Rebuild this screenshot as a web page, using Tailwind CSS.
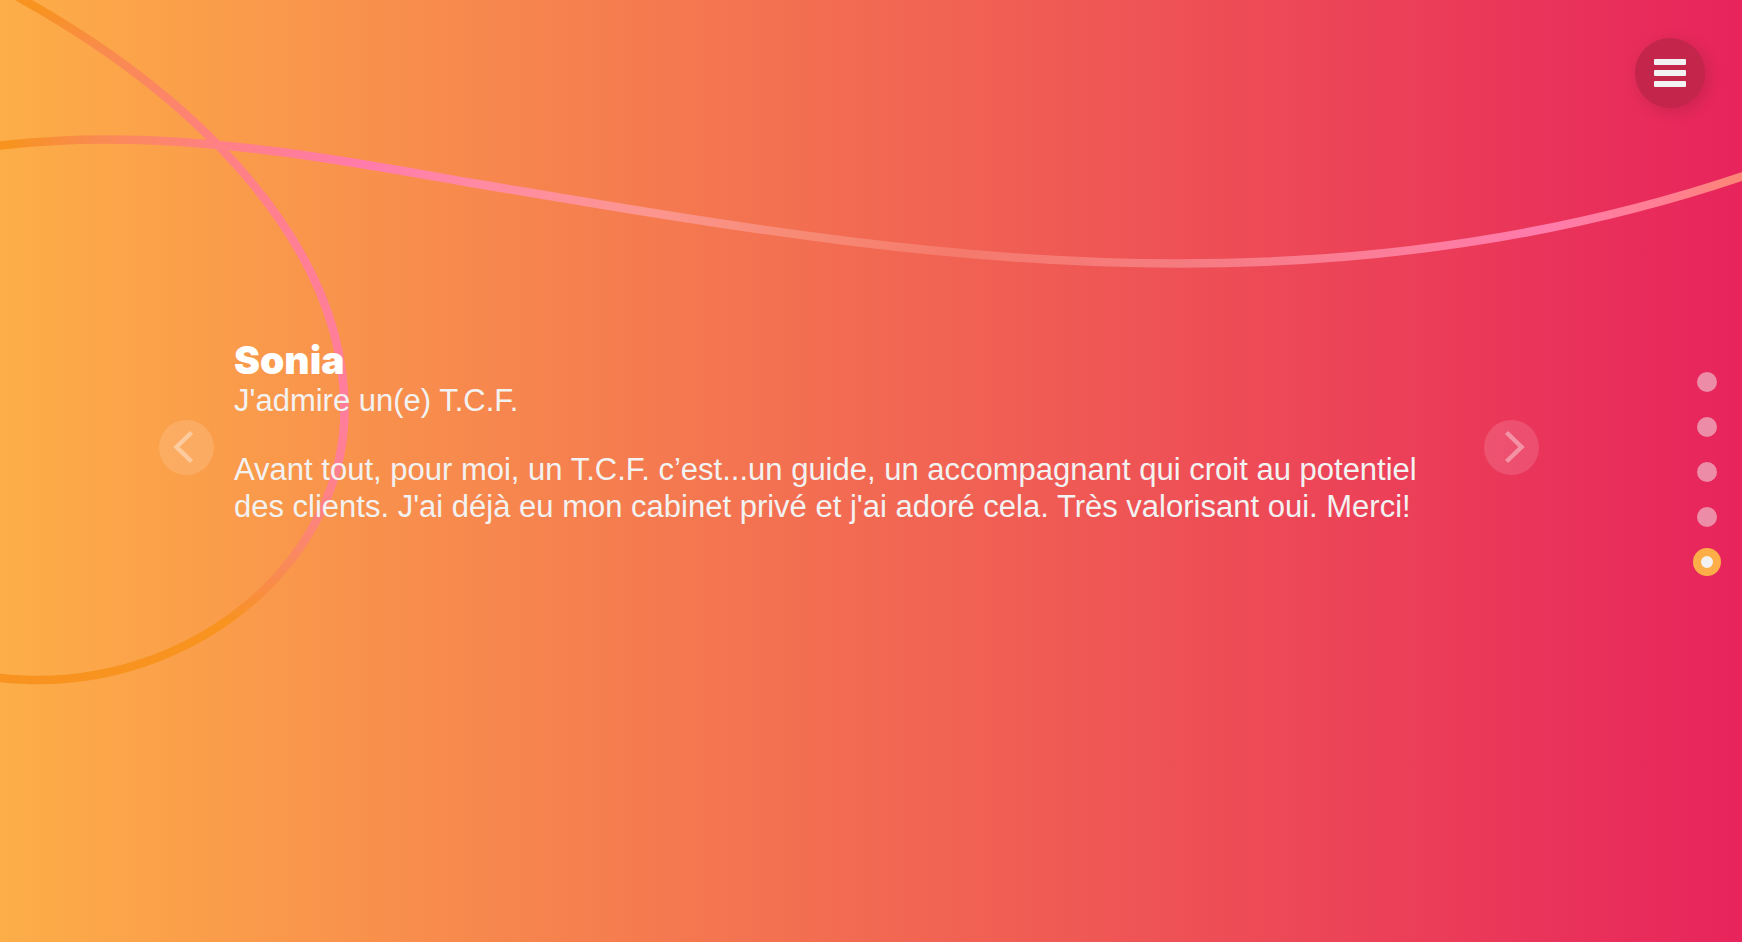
<!DOCTYPE html>
<html lang="fr">
<head>
<meta charset="utf-8">
<meta name="viewport" content="width=device-width, initial-scale=1">
<title>Témoignages</title>
<script src="https://cdn.jsdelivr.net/npm/@tailwindcss/browser@4"></script>
</head>
<body class="relative min-h-screen overflow-x-hidden bg-linear-to-r/srgb from-[#fdae48] to-[#e7245c] font-['Liberation_Sans',Arial,sans-serif] text-[#f2f2f2]">

  <!-- Decorative ribbons -->
  <svg class="pointer-events-none absolute inset-0 h-full w-full" viewBox="0 0 1742 942" preserveAspectRatio="none" fill="none" stroke-width="8.500" aria-hidden="true">
    <defs>
      <linearGradient id="wave" gradientUnits="userSpaceOnUse" x1="0" y1="0" x2="1742" y2="0">
        <stop offset="0.005" stop-color="#f7931e"/>
        <stop offset="0.045" stop-color="#f98c48"/>
        <stop offset="0.125" stop-color="#ff8085"/>
        <stop offset="0.21" stop-color="#ff7bac"/>
        <stop offset="0.28" stop-color="#ff8ba2"/>
        <stop offset="0.37" stop-color="#fc9690"/>
        <stop offset="0.46" stop-color="#f78a74"/>
        <stop offset="0.55" stop-color="#f57a6c"/>
        <stop offset="0.68" stop-color="#f67b80"/>
        <stop offset="0.8" stop-color="#fc7d9a"/>
        <stop offset="0.885" stop-color="#ff7bac"/>
        <stop offset="0.96" stop-color="#ff7f90"/>
        <stop offset="1" stop-color="#fd8575"/>
      </linearGradient>
      <linearGradient id="loop" gradientUnits="userSpaceOnUse" x1="0" y1="0" x2="0" y2="700">
        <stop offset="0.01" stop-color="#f7931e"/>
        <stop offset="0.07" stop-color="#f98b4c"/>
        <stop offset="0.2" stop-color="#ff8080"/>
        <stop offset="0.35" stop-color="#ff7f95"/>
        <stop offset="0.57" stop-color="#ff7d9c"/>
        <stop offset="0.66" stop-color="#ff7f95"/>
        <stop offset="0.75" stop-color="#fc8478"/>
        <stop offset="0.83" stop-color="#f98b4c"/>
        <stop offset="0.89" stop-color="#f7931e"/>
      </linearGradient>
    </defs>
    <path stroke="url(#loop)" d="M3 -12L23.500 0C203 101 344.500 248 344.500 410C344.500 555 205 680 37 680C20 680 10 679 -10 677"/>
    <path stroke="url(#wave)" d="M-10 146.500C30 142 65 139.500 105 139.500C230 139.500 350 161.500 466 182C690 219 930 263.500 1178 263.500C1375 263.500 1565 236 1742 176.500L1762 169"/>
  </svg>

  <button type="button" aria-label="Menu" class="absolute top-[38px] right-[37px] z-10 flex size-[70px] flex-col items-center justify-center gap-[5px] rounded-full bg-[#c3254b] shadow-[4px_4px_16px_rgba(0,0,0,0.12)]">
    <span class="h-[6px] w-8 rounded-[1px] bg-[#f2f2f2]"></span>
    <span class="h-[6px] w-8 rounded-[1px] bg-[#f2f2f2]"></span>
    <span class="h-[6px] w-8 rounded-[1px] bg-[#f2f2f2]"></span>
  </button>

  <main class="relative flex min-h-screen items-center gap-5 pr-[203px] pb-12 pl-[159px]">
    <button type="button" aria-label="Témoignage précédent" class="size-[55px] shrink-0 rounded-full bg-white/13">
      <svg class="size-full" viewBox="0 0 55 55" fill="none" stroke="#fff" stroke-opacity=".38" stroke-width="4.500" aria-hidden="true"><path d="M32.500 12.500L17.500 27L32.500 41.500"/></svg>
    </button>
    <article class="mb-8 min-w-0 flex-1 text-[31px] leading-[37px]">
      <h2 class="font-['Arial_Black',Inter,sans-serif] text-[39px] leading-11 font-black text-white">Sonia</h2>
      <p>J'admire un(e) T.C.F.</p>
      <p class="mt-8">Avant tout, pour moi, un T.C.F. c’est...un guide, un accompagnant qui croit au potentiel des clients. J'ai déjà eu mon cabinet privé et j'ai adoré cela. Très valorisant oui. Merci!</p>
    </article>
    <button type="button" aria-label="Témoignage suivant" class="size-[55px] shrink-0 rounded-full bg-white/13">
      <svg class="size-full" viewBox="0 0 55 55" fill="none" stroke="#fff" stroke-opacity=".38" stroke-width="4.500" aria-hidden="true"><path d="M22.500 12.500L37.500 27L22.500 41.500"/></svg>
    </button>
  </main>

  <nav aria-label="Sections" class="absolute top-1/2 right-[21px] -translate-y-1/2">
    <ul class="flex flex-col items-center pt-px">
      <li class="flex h-[45px] items-center"><a href="#s1" aria-label="Section 1" class="block size-5 rounded-full bg-[#f2f2f2]/50"></a></li>
      <li class="flex h-[45px] items-center"><a href="#s2" aria-label="Section 2" class="block size-5 rounded-full bg-[#f2f2f2]/50"></a></li>
      <li class="flex h-[45px] items-center"><a href="#s3" aria-label="Section 3" class="block size-5 rounded-full bg-[#f2f2f2]/50"></a></li>
      <li class="flex h-[45px] items-center"><a href="#s4" aria-label="Section 4" class="block size-5 rounded-full bg-[#f2f2f2]/50"></a></li>
      <li class="flex h-[45px] items-center"><a href="#s5" aria-label="Section 5" aria-current="true" class="block size-7 rounded-full border-8 border-[#fdae48] bg-[#f2f2f2]"></a></li>
    </ul>
  </nav>
</body>
</html>
